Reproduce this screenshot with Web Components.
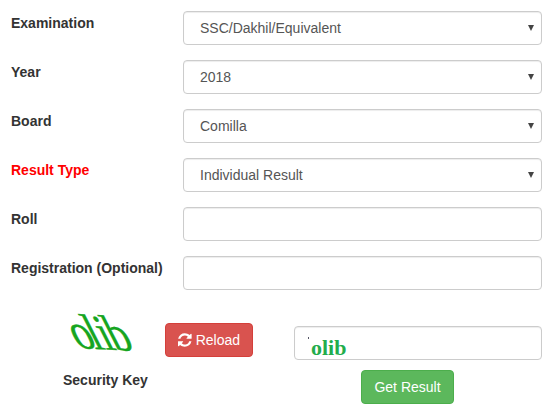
<!DOCTYPE html>
<html>
<head>
<meta charset="utf-8">
<title>Result</title>
<style>
  html, body { margin: 0; background: #fff; }
  body { font-family: "Liberation Sans", Arial, sans-serif; font-size: 14px; color: #333; }
</style>
</head>
<body>
<result-form>
  <form-row label="Examination"><form-select options="SSC/Dakhil/Equivalent"></form-select></form-row>
  <form-row label="Year"><form-select options="2018"></form-select></form-row>
  <form-row label="Board"><form-select options="Comilla"></form-select></form-row>
  <form-row label="Result Type" alert><form-select options="Individual Result"></form-select></form-row>
  <form-row label="Roll"><form-input></form-input></form-row>
  <form-row label="Registration (Optional)"><form-input></form-input></form-row>
  <security-key slot="footer" code="olib"></security-key>
</result-form>

<script>
const controlStyle = `
  :host { display: block; position: relative; }
  select, input {
    display: block;
    box-sizing: border-box;
    width: 100%;
    height: 34px;
    margin: 0;
    padding: 6px 12px;
    font: 14px/20px "Liberation Sans", Arial, sans-serif;
    color: #555;
    background: #fff;
    border: 1px solid #ccc;
    border-radius: 4px;
    box-shadow: inset 0 1px 1px rgba(0, 0, 0, .075);
    outline: none;
  }
  select { appearance: none; padding-left: 16px; }
`;

class ResultForm extends HTMLElement {
  constructor() {
    super();
    const shadow = this.attachShadow({mode: 'open'});
    shadow.innerHTML = `
    <style>
      :host { display: block; width: 552px; height: 418px; box-sizing: border-box; padding: 11px 10px 0 11px; overflow: hidden; }
      .rows { display: flex; flex-direction: column; gap: 15px; }
      .footer { margin-top: 15px; }
    </style>
    <div class="rows"><slot></slot></div>
    <div class="footer"><slot name="footer"></slot></div>
    `;
  }
}

class FormRow extends HTMLElement {
  constructor() {
    super();
    const shadow = this.attachShadow({mode: 'open'});
    shadow.innerHTML = `
    <style>
      :host { display: grid; grid-template-columns: 172px 359px; }
      label { margin-top: 2px; font-weight: bold; font-size: 14px; line-height: 20px; color: #333; white-space: nowrap; }
      :host([alert]) label { color: #f00; }
    </style>
    <label></label>
    <div><slot></slot></div>
    `;
    shadow.querySelector("label").textContent = this.getAttribute("label");
  }
}

class FormSelect extends HTMLElement {
  constructor() {
    super();
    const shadow = this.attachShadow({mode: 'open'});
    shadow.innerHTML = `
    <style>
      ${controlStyle}
      /* dropdown arrow sits over the select */
      .arrow { position: absolute; right: 8px; top: 14px; width: 0; height: 0; pointer-events: none;
        border-left: 3.5px solid transparent; border-right: 3.5px solid transparent; border-top: 6px solid #444; }
    </style>
    <select></select><span class="arrow"></span>`;
    const select = shadow.querySelector("select");
    this.getAttribute("options").split("|").forEach((t) => select.add(new Option(t)));
  }
}

class FormInput extends HTMLElement {
  constructor() {
    super();
    const shadow = this.attachShadow({mode: 'open'});
    shadow.innerHTML = `<style>${controlStyle}</style><input type="text">`;
  }
}

class SecurityKey extends HTMLElement {
  constructor() {
    super();
    const shadow = this.attachShadow({mode: 'open'});
    const code = this.getAttribute("code");
    shadow.innerHTML = `
    <style>
      :host { display: grid; grid-template-columns: 154px 129px 248px; font-family: "Liberation Sans", Arial, sans-serif; }
      .key { display: flex; flex-direction: column; padding-left: 52px; }
      .captcha { height: 55px; width: 70px; margin: 0 0 0 6px; overflow: visible; }
      .caption { margin-top: 10px; font-weight: bold; font-size: 14px; line-height: 20px; color: #333; white-space: nowrap; }
      .reload { padding-top: 18px; }
      .field { position: relative; padding-top: 21px; }
      .field input {
        display: block; box-sizing: border-box; width: 100%; height: 34px; padding: 9px 16px 0;
        font: bold 22px/24px "Liberation Serif", serif; color: #22ad4c;
        background: #fff; border: 1px solid #ccc; border-radius: 4px; outline: none;
        box-shadow: inset 0 1px 1px rgba(0, 0, 0, .075);
      }
      .speck { position: absolute; left: 14px; top: 32px; width: 1px; height: 2px; background: #556; }
      .submit { margin: 10px 0 0 67px; }
      button {
        display: inline-flex; align-items: center; justify-content: center; gap: 4px;
        box-sizing: border-box; height: 34px; padding: 0 12px;
        font: 14px/20px "Liberation Sans", Arial, sans-serif; color: #fff;
        border: 1px solid; border-radius: 4px;
      }
      .danger { width: 88px; background: #d9534f; border-color: #d43f3a; }
      .success { width: 93px; background: #5cb85c; border-color: #4cae4c; }
      .danger svg { width: 14px; height: 14px; fill: #fff; }
    </style>
    <div class="key">
      <svg class="captcha" viewBox="0 0 70 55">
        <text transform="translate(9 43) rotate(3) skewX(30) scale(.85 .98)" x="0 20 33 44" font-family="Liberation Serif" font-size="50" stroke="#16a520" stroke-width=".4" fill="#16a520">${code}</text>
      </svg>
      <div class="caption">Security Key</div>
    </div>
    <div class="reload">
      <button class="danger"><svg viewBox="0 0 1536 1536"><path d="M1511 928q0 5-1 7-64 268-268 434.5t-478 166.5q-146 0-282.5-55t-243.5-157l-129 129q-19 19-45 19t-45-19-19-45v-448q0-26 19-45t45-19h448q26 0 45 19t19 45-19 45l-137 137q71 66 161 102t187 36q134 0 250-65t186-179q11-17 53-117 8-23 30-23h192q13 0 22.5 9.5t9.5 22.5zm25-800v448q0 26-19 45t-45 19h-448q-26 0-45-19t-19-45 19-45l138-138q-148-137-349-137-134 0-250 65t-186 179q-11 17-53 117-8 23-30 23h-199q-13 0-22.5-9.5t-9.5-22.5v-7q65-268 270-434.5t480-166.5q146 0 284 55.5t245 156.5l130-129q19-19 45-19t45 19 19 45z"/></svg>Reload</button>
    </div>
    <div class="field">
      <input type="text" value="${code}">
      <span class="speck"></span>
      <div class="submit"><button class="success">Get Result</button></div>
    </div>
    `;
  }
}

customElements.define("result-form", ResultForm);
customElements.define("form-row", FormRow);
customElements.define("form-select", FormSelect);
customElements.define("form-input", FormInput);
customElements.define("security-key", SecurityKey);
</script>
</body>
</html>
